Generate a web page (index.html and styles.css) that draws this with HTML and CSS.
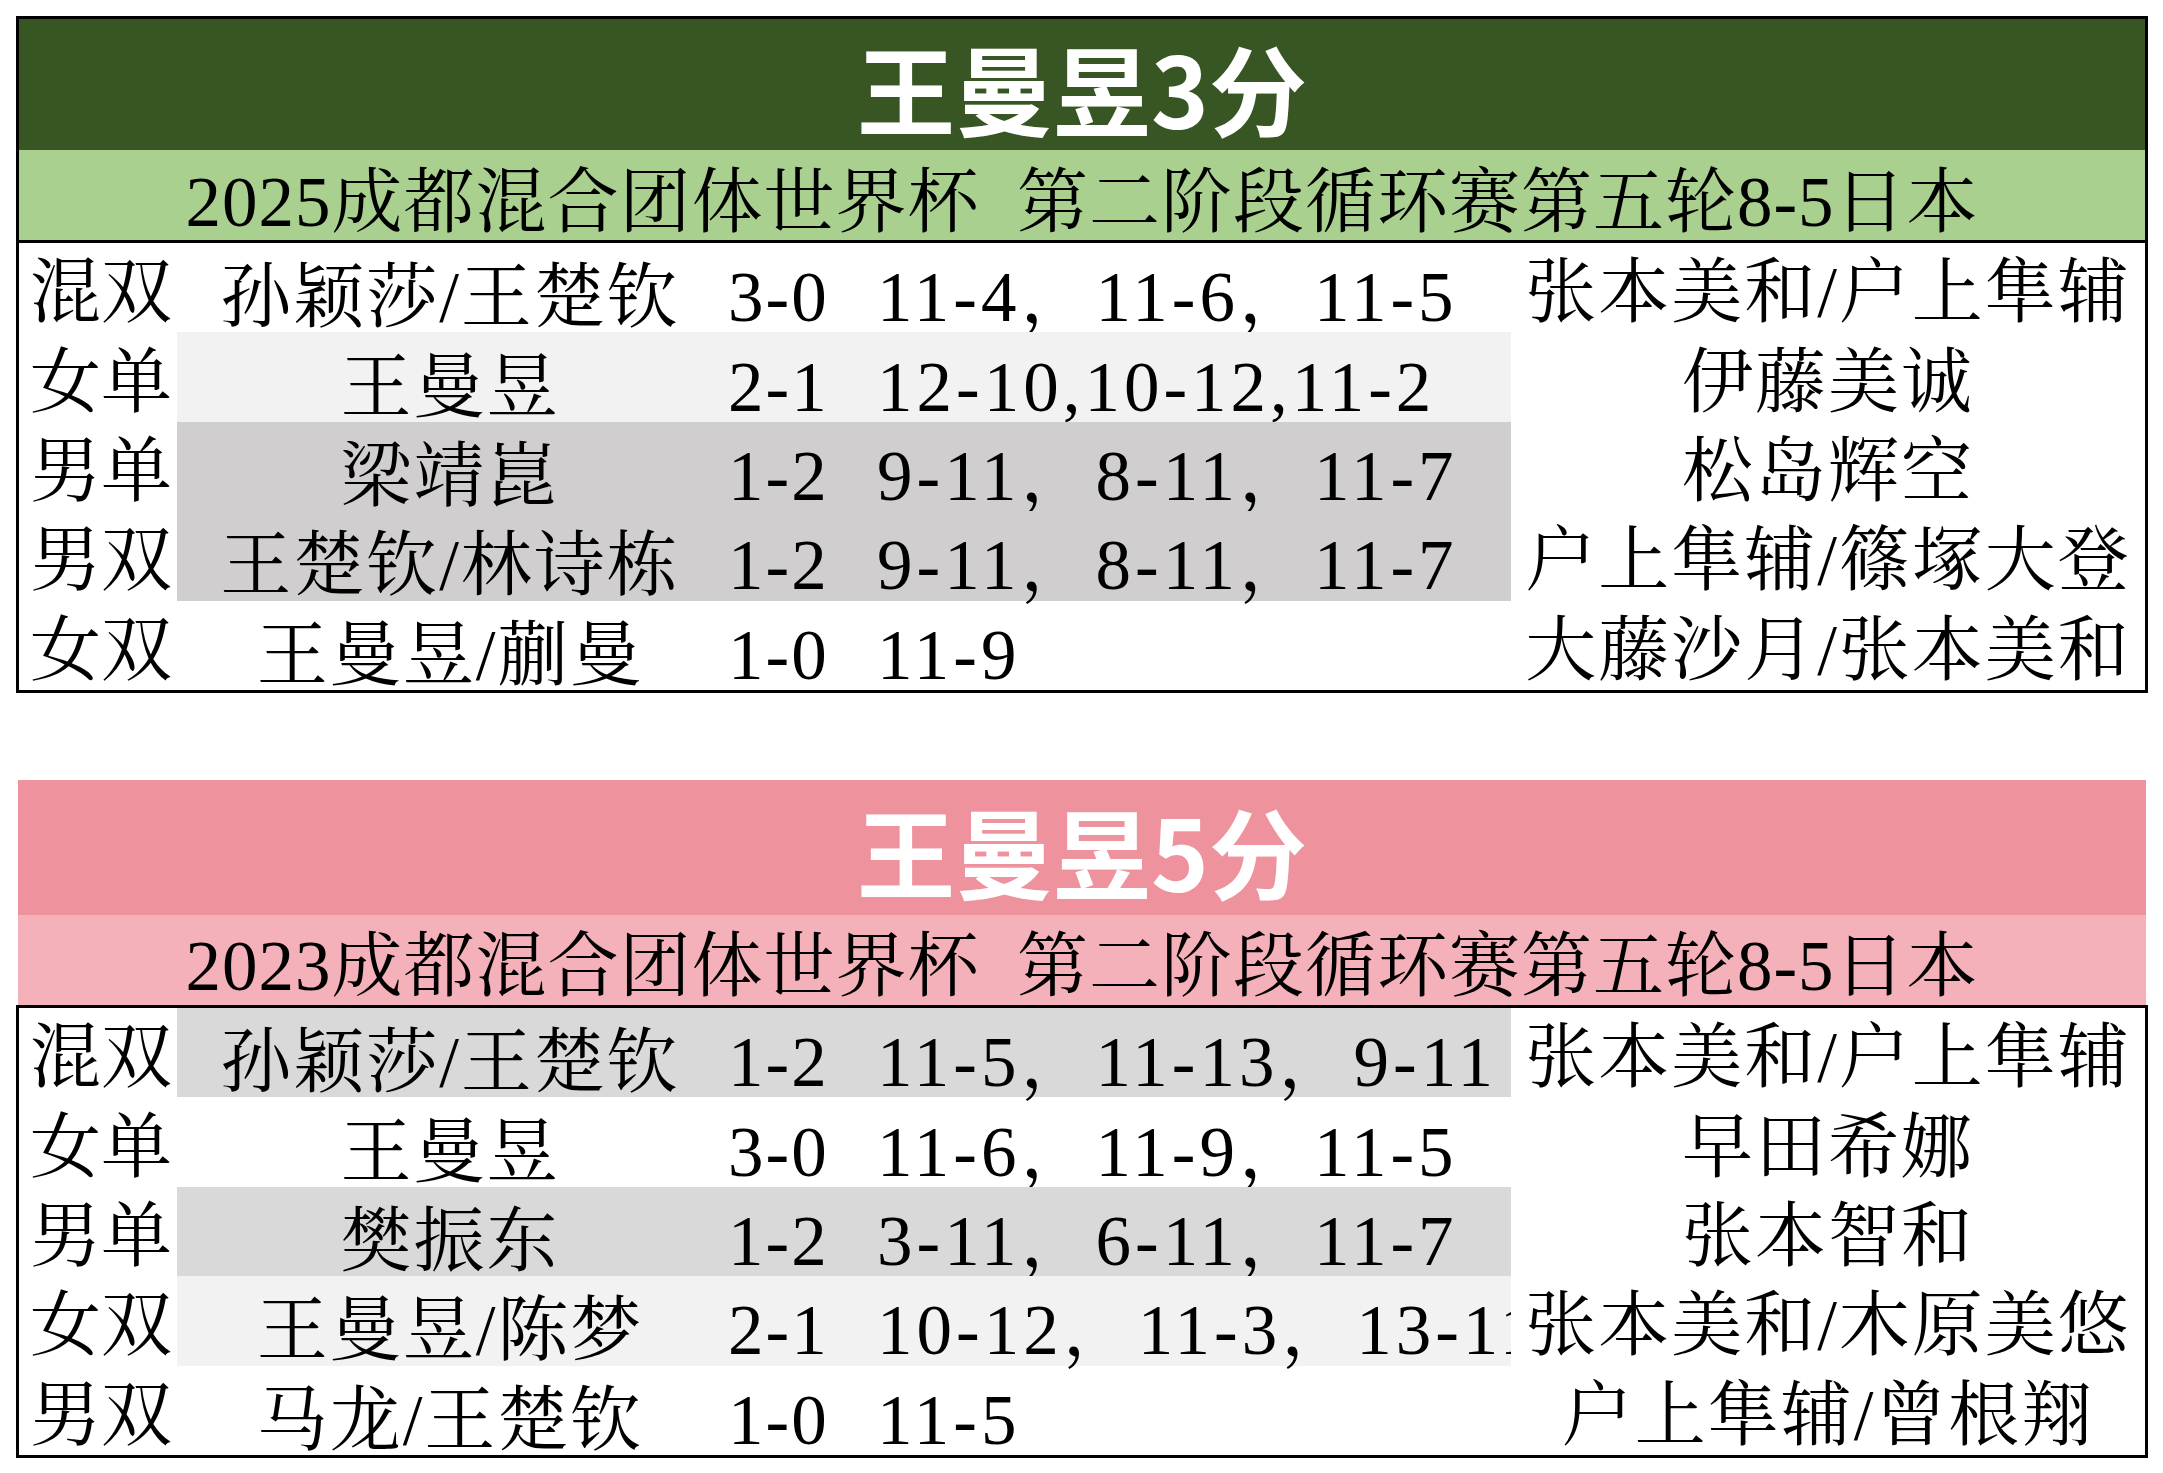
FILE: index.html
```html
<!DOCTYPE html>
<html lang="zh-CN">
<head>
<meta charset="utf-8">
<title>王曼昱 世界杯 对日本</title>
<link rel="stylesheet" href="styles.css">
</head>
<body>
<div class="page">
  <section class="card card-green">
    <div class="title title-green">王曼昱3分</div>
    <div class="sub sub-green">2025成都混合团体世界杯  第二阶段循环赛第五轮8-5日本</div>
    <div class="rows">
      <div class="row">
        <div class="c-label">混双</div>
        <div class="mid">
          <div class="c-name">孙颖莎/王楚钦</div>
          <div class="c-score">3-0</div>
          <div class="c-detail">11-4，11-6，11-5</div>
        </div>
        <div class="c-opp">张本美和/户上隼辅</div>
      </div>
      <div class="row">
        <div class="c-label">女单</div>
        <div class="mid shade-light">
          <div class="c-name">王曼昱</div>
          <div class="c-score">2-1</div>
          <div class="c-detail">12-10,10-12,11-2</div>
        </div>
        <div class="c-opp">伊藤美诚</div>
      </div>
      <div class="row">
        <div class="c-label">男单</div>
        <div class="mid shade-warm">
          <div class="c-name">梁靖崑</div>
          <div class="c-score">1-2</div>
          <div class="c-detail">9-11，8-11，11-7</div>
        </div>
        <div class="c-opp">松岛辉空</div>
      </div>
      <div class="row">
        <div class="c-label">男双</div>
        <div class="mid shade-warm">
          <div class="c-name">王楚钦/林诗栋</div>
          <div class="c-score">1-2</div>
          <div class="c-detail">9-11，8-11，11-7</div>
        </div>
        <div class="c-opp">户上隼辅/篠塚大登</div>
      </div>
      <div class="row">
        <div class="c-label">女双</div>
        <div class="mid">
          <div class="c-name">王曼昱/蒯曼</div>
          <div class="c-score">1-0</div>
          <div class="c-detail">11-9</div>
        </div>
        <div class="c-opp">大藤沙月/张本美和</div>
      </div>
    </div>
  </section>

  <section class="card card-pink">
    <div class="title title-pink">王曼昱5分</div>
    <div class="sub sub-pink">2023成都混合团体世界杯  第二阶段循环赛第五轮8-5日本</div>
    <div class="rows rows-boxed">
      <div class="row">
        <div class="c-label">混双</div>
        <div class="mid shade-gray">
          <div class="c-name">孙颖莎/王楚钦</div>
          <div class="c-score">1-2</div>
          <div class="c-detail">11-5，11-13，9-11</div>
        </div>
        <div class="c-opp">张本美和/户上隼辅</div>
      </div>
      <div class="row">
        <div class="c-label">女单</div>
        <div class="mid">
          <div class="c-name">王曼昱</div>
          <div class="c-score">3-0</div>
          <div class="c-detail">11-6，11-9，11-5</div>
        </div>
        <div class="c-opp">早田希娜</div>
      </div>
      <div class="row">
        <div class="c-label">男单</div>
        <div class="mid shade-gray">
          <div class="c-name">樊振东</div>
          <div class="c-score">1-2</div>
          <div class="c-detail">3-11，6-11，11-7</div>
        </div>
        <div class="c-opp">张本智和</div>
      </div>
      <div class="row">
        <div class="c-label">女双</div>
        <div class="mid shade-light">
          <div class="c-name">王曼昱/陈梦</div>
          <div class="c-score">2-1</div>
          <div class="c-detail clip">10-12，11-3，13-11</div>
        </div>
        <div class="c-opp">张本美和/木原美悠</div>
      </div>
      <div class="row">
        <div class="c-label">男双</div>
        <div class="mid">
          <div class="c-name">马龙/王楚钦</div>
          <div class="c-score">1-0</div>
          <div class="c-detail">11-5</div>
        </div>
        <div class="c-opp">户上隼辅/曾根翔</div>
      </div>
    </div>
  </section>
</div>
</body>
</html>
```

FILE: styles.css
```css
html, body {
  margin: 0;
  padding: 0;
  background: #ffffff;
}

.page {
  padding: 16px 0 0 16px;
  font-family: "Liberation Serif", "Noto Serif CJK SC", "Noto Sans CJK SC", serif;
  font-size: 71px;
  color: #000;
  line-height: 1;
}

.card {
  width: 2132px;
  box-sizing: border-box;
}

.card-green {
  border: 3px solid #000;
}

.card-pink {
  margin-top: 87px;
}

.title {
  display: flex;
  align-items: center;
  justify-content: center;
  font-family: "Noto Sans CJK SC", sans-serif;
  font-weight: 700;
  font-size: 98px;
  color: #ffffff;
}

.title-green {
  height: 131px;
  padding-top: 2px;
  box-sizing: border-box;
  background: #375623;
}

.title-pink {
  height: 135px;
  padding-top: 4px;
  box-sizing: border-box;
  margin: 0 2px;
  background: #ee939d;
}

.sub {
  display: flex;
  align-items: center;
  justify-content: center;
  height: 90px;
  padding-top: 14px;
  box-sizing: border-box;
  white-space: pre;
  letter-spacing: 1px;
}

.sub-green {
  background: #a9d08e;
  border-bottom: 3px solid #000;
  height: 93px;
}

.sub-pink {
  margin: 0 2px;
  background: #f4b1b9;
}

.rows-boxed {
  border: 3px solid #000;
}

.row {
  display: flex;
  height: 89.4px;
}

.row > div,
.mid > div {
  display: flex;
  align-items: center;
  padding-top: 10px;
  box-sizing: border-box;
  white-space: nowrap;
}

.mid {
  display: flex;
  width: 1334px;
  flex: none;
}

.c-label {
  width: 158px;
  flex: none;
  padding-left: 11px;
}

.c-name {
  width: 546px;
  flex: none;
  justify-content: center;
  letter-spacing: 2px;
}

.c-score {
  width: 147px;
  flex: none;
  padding-left: 5px;
  letter-spacing: 2px;
}

.c-detail {
  width: 641px;
  flex: none;
  padding-left: 7px;
  letter-spacing: 4px;
}

.c-detail.clip {
  overflow-x: clip;
}

.c-opp {
  flex: 1;
  justify-content: center;
  letter-spacing: 2px;
}

.shade-light {
  background: #f2f2f2;
}

.shade-warm {
  background: #d0cece;
}

.shade-gray {
  background: #d9d9d9;
}
```
